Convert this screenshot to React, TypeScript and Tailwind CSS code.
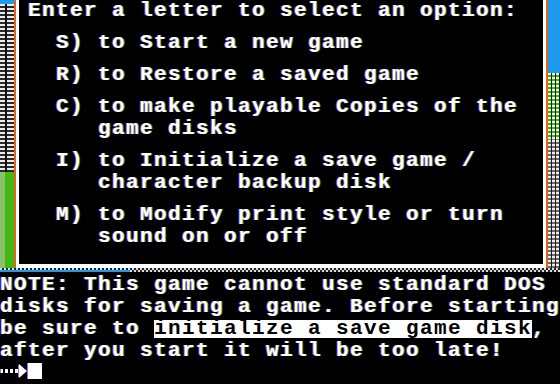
import React from 'react';

const line = 'h-[22px] leading-[22px] whitespace-pre';
const fringe = '[text-shadow:-1px_0_rgba(190,90,255,0.7),1px_0_rgba(90,220,60,0.6)]';

const menu: { key: string; lines: string[] }[] = [
  { key: 'S', lines: ['  S) to Start a new game'] },
  { key: 'R', lines: ['  R) to Restore a saved game'] },
  { key: 'C', lines: ['  C) to make playable Copies of the', '     game disks'] },
  { key: 'I', lines: ['  I) to Initialize a save game /', '     character backup disk'] },
  { key: 'M', lines: ['  M) to Modify print style or turn', '     sound on or off'] },
];

const Arrow: React.FC = () => (
  <svg width="28" height="16" viewBox="0 0 28 16" className="mt-[1px]">
    {[0, 5, 10, 15].map((x) => (
      <rect key={x} x={x} y={6} width={3} height={4} fill="#fff" />
    ))}
    <polygon points="19,1 27,8 19,15" fill="#fff" />
    <rect x={18} y={2} width={1} height={12} fill="#b05aff" />
    <rect x={0} y={6} width={1} height={4} fill="#b05aff" />
  </svg>
);

export default function App() {
  return (
    <div
      className={`w-[560px] h-[384px] bg-black overflow-hidden text-white font-['Liberation_Mono',monospace] font-bold text-[21px] tracking-[1.4px] ${fringe}`}
    >
      {/* top: framed menu with side strips */}
      <div className="flex h-[268px]">
        <div className="w-[14px] flex flex-col">
          <div className="h-[4px] bg-[#1e9bef]" />
          <div className="flex-1 bg-[repeating-linear-gradient(90deg,transparent_0_5px,#111_5px_7px,transparent_7px_14px),repeating-linear-gradient(180deg,#ededed_0_2px,#2a2a2a_2px_4px)]" />
          <div className="h-[96px] flex">
            <div className="w-[5px] bg-[#8fbf6a]" />
            <div className="flex-1 bg-[#42b814]" />
          </div>
        </div>
        <div className="w-[2px] bg-[#e0641c]" />
        <div className="flex-1 border-l-[3px] border-r-[3px] border-b-[4px] border-white pl-[9px]">
          <div className={line}>Enter a letter to select an option:</div>
          {menu.map((item) => (
            <div key={item.key} className="mt-[10px]">
              {item.lines.map((t) => (
                <div key={t} className={line}>
                  {t}
                </div>
              ))}
            </div>
          ))}
        </div>
        <div className="w-[2px] bg-[#e0641c]" />
        <div className="w-[12px] flex flex-col">
          <div className="h-[73px] bg-[#1e9bef]" />
          <div className="h-[67px] bg-[repeating-linear-gradient(90deg,transparent_0_3px,#1a1a1a_3px_4px),repeating-linear-gradient(180deg,#e8ffe0_0_2px,#3fb812_2px_4px)]" />
          <div className="flex-1 bg-[repeating-linear-gradient(90deg,transparent_0_3px,#1a1a1a_3px_4px),repeating-linear-gradient(180deg,#eeeeee_0_2px,#6a6a6a_2px_4px)]" />
        </div>
      </div>

      {/* dotted strip under the frame */}
      <div className="h-[2px] bg-[repeating-linear-gradient(90deg,#dcdcdc_0_2px,#222_2px_4px)]" />
      <div className="h-[2px] flex">
        <div className="w-[130px] bg-[#1e9bef]" />
        <div className="flex-1 bg-[repeating-linear-gradient(90deg,#dcdcdc_0_2px,#222_2px_4px)]" />
      </div>

      {/* bottom note */}
      <div className="mt-[2px]">
        <div className={line}>NOTE: This game cannot use standard DOS</div>
        <div className={line}>disks for saving a game. Before starting</div>
        <div className={line}>
          be sure to{' '}
          <span className="inline-block h-[18px] leading-[18px] bg-white text-black [text-shadow:none]">
            initialize a save game disk
          </span>
          ,
        </div>
        <div className={line}>after you start it will be too late!</div>
        <div className="h-[22px] flex items-start">
          <Arrow />
          <div className="mt-[1px] w-[14px] h-[16px] bg-white shadow-[-1px_0_0_#b05aff]" />
        </div>
      </div>
    </div>
  );
}
